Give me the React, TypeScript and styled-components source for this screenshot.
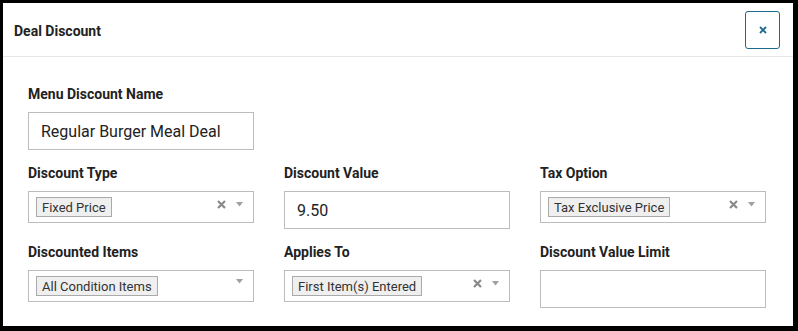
import React from "react";
import styled, { createGlobalStyle } from "styled-components";

const textDark = "#222222";
const borderGray = "#bcbcbc";
const accentBlue = "#1d6a8e";

const GlobalStyle = createGlobalStyle`
  html, body {
    margin: 0;
    padding: 0;
    background: #000;
  }
  body {
    font-family: Roboto, "Liberation Sans", Arial, sans-serif;
    color: ${textDark};
  }
`;

/** Белое окно модалки поверх чёрного фона. */
const Modal = styled.div`
  margin: 3px 5px 5px 3px;
  width: 790px;
  height: 323px;
  background: #fff;
  box-sizing: border-box;
`;

const Header = styled.div`
  display: flex;
  align-items: center;
  justify-content: space-between;
  height: 54px;
  padding: 0 13px 0 11px;
  border-bottom: 1px solid #e6e6e6;
  box-sizing: border-box;
`;

const Title = styled.h2`
  margin: 2px 0 0;
  font-size: 14px;
  font-weight: 700;
  color: ${textDark};
`;

const CloseButton = styled.button`
  display: inline-flex;
  align-items: center;
  justify-content: center;
  width: 35px;
  height: 38px;
  padding: 0;
  background: #fff;
  border: 1px solid ${accentBlue};
  border-radius: 3px;
  cursor: pointer;
`;

const Body = styled.div`
  padding: 28px 27px 0 25px;
`;

/** Сетка полей: 3 колонки по 226px. */
const FieldGrid = styled.div`
  display: grid;
  grid-template-columns: repeat(3, 226px);
  column-gap: 30px;
  row-gap: 14px;
  align-items: start;
`;

const Field = styled.div<{ $full?: boolean }>`
  display: flex;
  flex-direction: column;
  grid-column: ${({ $full }) => ($full ? "1 / -1" : "auto")};
`;

const Label = styled.label`
  font-size: 14px;
  font-weight: 700;
  line-height: 18px;
  margin-bottom: 9px;
  color: ${textDark};
`;

const TextInput = styled.input`
  width: 226px;
  height: 38px;
  box-sizing: border-box;
  border: 1px solid ${borderGray};
  border-radius: 0;
  padding: 0 12px;
  font-family: inherit;
  font-size: 16px;
  color: ${textDark};
  background: #fff;
  outline: none;
`;

const SelectBox = styled.div`
  display: flex;
  align-items: center;
  width: 226px;
  height: 32px;
  box-sizing: border-box;
  border: 1px solid ${borderGray};
  padding: 0 10px 0 7px;
  background: #fff;
`;

const Tag = styled.span`
  display: inline-flex;
  align-items: center;
  height: 20px;
  padding: 0 5px;
  box-sizing: border-box;
  border: 1px solid #aaaaaa;
  background: #efefef;
  font-size: 13px;
  color: #333;
  white-space: nowrap;
`;

const Controls = styled.span`
  display: flex;
  align-items: center;
  gap: 10px;
  margin-left: auto;
  align-self: flex-start;
  margin-top: 8px;
`;

const ClearIcon = () => (
  <svg width="9" height="9" viewBox="0 0 9 9">
    <path d="M1 1 L8 8 M8 1 L1 8" stroke="#8a8a8a" strokeWidth="2.2" />
  </svg>
);

const ArrowIcon = () => (
  <svg width="7" height="5" viewBox="0 0 7 5">
    <path d="M0 0 H7 L3.5 4.5 Z" fill="#a0a0a0" />
  </svg>
);

const Select = ({ value, clearable = true }: { value: string; clearable?: boolean }) => (
  <SelectBox>
    <Tag>{value}</Tag>
    <Controls>
      {clearable && <ClearIcon />}
      <ArrowIcon />
    </Controls>
  </SelectBox>
);

export default function App() {
  return (
    <>
      <GlobalStyle />
      <Modal>
        <Header>
          <Title>Deal Discount</Title>
          <CloseButton aria-label="Close">
            <svg width="8" height="8" viewBox="0 0 8 8">
              <path d="M1 1 L7 7 M7 1 L1 7" stroke={accentBlue} strokeWidth="1.8" />
            </svg>
          </CloseButton>
        </Header>
        <Body>
          <FieldGrid>
            <Field $full>
              <Label>Menu Discount Name</Label>
              <TextInput defaultValue="Regular Burger Meal Deal" />
            </Field>
            <Field>
              <Label>Discount Type</Label>
              <Select value="Fixed Price" />
            </Field>
            <Field>
              <Label>Discount Value</Label>
              <TextInput defaultValue="9.50" />
            </Field>
            <Field>
              <Label>Tax Option</Label>
              <Select value="Tax Exclusive Price" />
            </Field>
            <Field>
              <Label>Discounted Items</Label>
              <Select value="All Condition Items" clearable={false} />
            </Field>
            <Field>
              <Label>Applies To</Label>
              <Select value="First Item(s) Entered" />
            </Field>
            <Field>
              <Label>Discount Value Limit</Label>
              <TextInput />
            </Field>
          </FieldGrid>
        </Body>
      </Modal>
    </>
  );
}
